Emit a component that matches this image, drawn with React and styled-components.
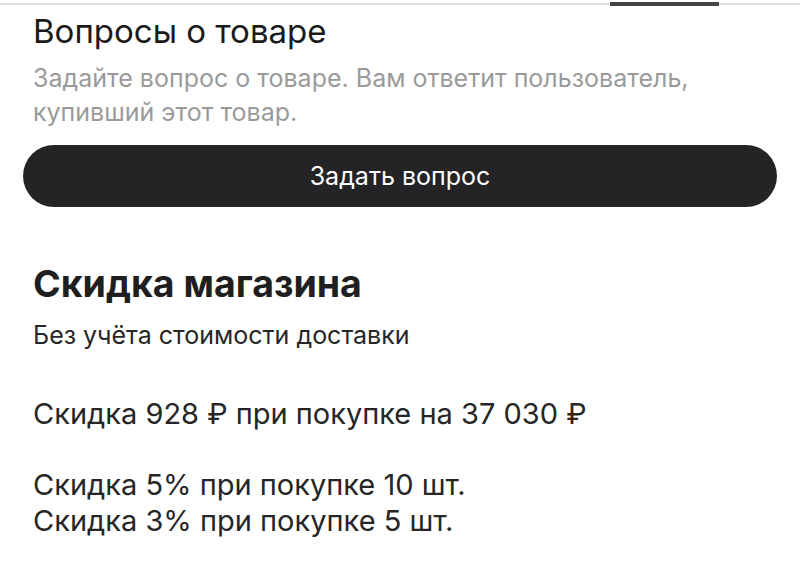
import React from "react";
import styled, { createGlobalStyle } from "styled-components";

const GlobalStyle = createGlobalStyle`
  html, body {
    margin: 0;
    padding: 0;
    background: #ffffff;
  }
  body {
    font-family: Inter, Roboto, "Noto Sans", sans-serif;
    color: #1f1f1f;
  }
`;

const Page = styled.div`
  width: 800px;
  height: 578px;
  overflow: hidden;
  background: #fff;
`;

const Tabs = styled.div`
  position: relative;
  height: 2px;
  margin-top: 3px;
  background: #dedee2;
`;

const TabIndicator = styled.div`
  position: absolute;
  left: 610px;
  top: -1px;
  width: 109px;
  height: 4px;
  background: #444;
`;

const Content = styled.div`
  padding: 0 23px 0 33px;
`;

const Section = styled.section`
  display: flex;
  flex-direction: column;
`;

const Title = styled.h2`
  margin: 6px 0 0;
  font-size: 33px;
  line-height: 40px;
  font-weight: 400;
  color: #1a1a1a;
`;

const Hint = styled.p`
  margin: 10px 0 0;
  font-size: 25px;
  line-height: 34px;
  color: #9a9a9a;
`;

const Button = styled.button`
  margin: 16px 0 0 -10px;
  height: 62px;
  border: 0;
  border-radius: 31px;
  background: #242426;
  color: #fff;
  font-family: inherit;
  font-size: 25px;
  cursor: pointer;
`;

const Heading = styled.h2`
  margin: 55px 0 0;
  font-size: 37.5px;
  line-height: 44px;
  font-weight: 700;
  color: #1f1f1f;
`;

const Note = styled.p`
  margin: 13px 0 0;
  font-size: 25px;
  line-height: 32px;
  color: #262626;
`;

const Offers = styled.div`
  margin-top: ${(p) => p.$gap}px;
  display: flex;
  flex-direction: column;
`;

const Offer = styled.div`
  font-size: 29px;
  line-height: 36px;
  color: #262626;
`;

export default function App() {
  return (
    <Page>
      <GlobalStyle />
      <Tabs>
        <TabIndicator />
      </Tabs>
      <Content>
        <Section>
          <Title>Вопросы о товаре</Title>
          <Hint>
            Задайте вопрос о товаре. Вам ответит пользователь,
            <br />
            купивший этот товар.
          </Hint>
          <Button>Задать вопрос</Button>
        </Section>
        <Section>
          <Heading>Скидка магазина</Heading>
          <Note>Без учёта стоимости доставки</Note>
          <Offers $gap={45}>
            <Offer>Скидка 928 ₽ при покупке на 37 030 ₽</Offer>
          </Offers>
          <Offers $gap={35}>
            <Offer>Скидка 5% при покупке 10 шт.</Offer>
            <Offer>Скидка 3% при покупке 5 шт.</Offer>
          </Offers>
        </Section>
      </Content>
    </Page>
  );
}
